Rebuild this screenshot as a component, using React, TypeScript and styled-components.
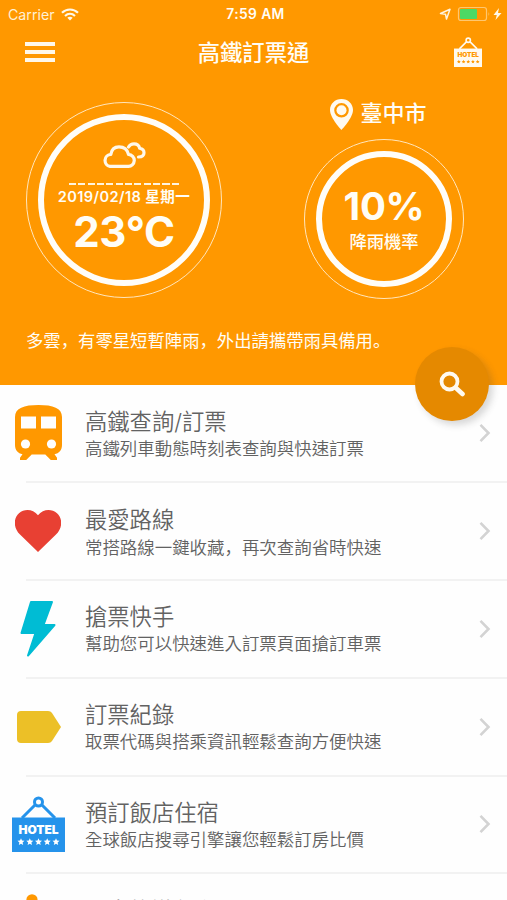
import React from "react";
import styled, { createGlobalStyle } from "styled-components";

const Global = createGlobalStyle`
  html, body { margin: 0; background: #fff; }
  body {
    height: 900px;
    overflow: hidden;
    font-family: Inter, "Noto Sans CJK TC", sans-serif;
    color: #626262;
  }
`;

const Screen = styled.div`
  width: 507px;
  height: 900px;
  overflow: hidden;
  display: flex;
  flex-direction: column;
  background: #fefefe;
`;

const Hero = styled.header`
  position: relative;
  flex: none;
  height: 384.5px;
  background: #ff9800;
  color: #fffdf6;
`;

const StatusBar = styled.div`
  height: 28px;
  display: grid;
  grid-template-columns: 1fr auto 1fr;
  align-items: center;
  padding: 0 5px 0 8px;
  box-sizing: border-box;
  font-size: 14.2px;
`;

const StatusGroup = styled.div<{ $end?: boolean }>`
  display: flex;
  align-items: center;
  gap: 6px;
  justify-content: ${(p) => (p.$end ? "flex-end" : "flex-start")};
  color: #fff0d4;
`;

const Clock = styled.span`
  font-weight: 600;
  font-size: 13.8px;
  letter-spacing: 0.4px;
  padding-left: 1px;
`;

const NavBar = styled.div`
  height: 48px;
  display: grid;
  grid-template-columns: 1fr auto 1fr;
  align-items: center;
  padding: 0 25px 0 25px;
`;

const Burger = styled.button`
  width: 30px;
  height: 20px;
  padding: 0;
  border: 0;
  background: none;
  display: flex;
  flex-direction: column;
  justify-content: space-between;
`;

const BurgerLine = styled.i`
  height: 4px;
  width: 30px;
  background: #fff8ea;
`;

const NavTitle = styled.h1`
  margin: 0;
  padding-top: 1px;
  font-size: 22.3px;
  font-weight: 500;
  line-height: 30px;
`;

const NavAction = styled.div`
  display: flex;
  justify-content: flex-end;
`;

const Weather = styled.section`
  display: flex;
  justify-content: space-between;
  height: 248px;
  padding: 0 43px 0 26px;
  box-sizing: border-box;
`;

const Ring = styled.div<{ $size: number }>`
  width: ${(p) => p.$size}px;
  height: ${(p) => p.$size}px;
  box-sizing: border-box;
  border: 1.4px solid #ffe6bd;
  border-radius: 50%;
  padding: 11px;
`;

const InnerRing = styled.div`
  width: 100%;
  height: 100%;
  box-sizing: border-box;
  border: 6.5px solid #fffdf8;
  border-radius: 50%;
  display: flex;
  flex-direction: column;
  align-items: center;
  white-space: nowrap;
`;

const TemperatureColumn = styled.div`
  padding-top: 26px;
`;

const RainColumn = styled.div`
  display: flex;
  flex-direction: column;
  width: 160px;
  padding-top: 22px;
`;

const Place = styled.div`
  display: flex;
  align-items: center;
  gap: 8px;
  height: 32px;
  margin: 0 0 9px 25.5px;
  font-size: 22px;
  line-height: 28px;
  font-weight: 500;
`;

const PlaceName = styled.span`
  padding-bottom: 3px;
`;

const CloudSlot = styled.div`
  height: 26px;
  margin-top: 22px;
`;

const Dashes = styled.div`
  width: 110px;
  height: 2px;
  margin-top: 15px;
  background: repeating-linear-gradient(90deg, #fff4df 0 7px, transparent 7px 9.35px);
`;

const DateText = styled.div`
  margin-top: 2px;
  font-size: 14.6px;
  line-height: 20px;
  font-weight: 600;
  letter-spacing: 0.4px;
`;

const BigValue = styled.div<{ $size: number; $top: number }>`
  margin-top: ${(p) => p.$top}px;
  font-size: ${(p) => p.$size}px;
  line-height: 46px;
  font-weight: 700;
  letter-spacing: -0.3px;
`;

const RainLabel = styled.div`
  margin-top: 2px;
  font-size: 17.3px;
  line-height: 22px;
  font-weight: 500;
`;

const Forecast = styled.p`
  margin: 4px 0 0 26px;
  font-size: 17.35px;
  line-height: 24px;
`;

const Mark = styled.span`
  font-family: "Noto Sans CJK SC", sans-serif;
`;

const SearchButton = styled.button`
  position: absolute;
  left: 415px;
  top: 347px;
  width: 74px;
  height: 74px;
  padding: 0;
  border: 0;
  border-radius: 50%;
  background: #e58900;
  box-shadow: 4px 4px 7px rgba(60, 60, 60, 0.2);
  display: flex;
  align-items: center;
  justify-content: center;
`;

const List = styled.main`
  display: flex;
  flex-direction: column;
`;

const Row = styled.article`
  flex: none;
  height: 97.75px;
  display: grid;
  grid-template-columns: 85px 1fr 29px;
`;

const IconSlot = styled.div`
  display: flex;
  align-items: center;
  justify-content: center;
  padding-right: 9px;
`;

const RowText = styled.div`
  padding-top: 22.4px;
  white-space: nowrap;
`;

const RowTitle = styled.h2`
  margin: 0;
  font-size: 22.3px;
  font-weight: 350;
  line-height: 30px;
`;

const RowNote = styled.p`
  margin: -1px 0 0;
  font-size: 17.45px;
  font-weight: 350;
  line-height: 26px;
`;

const Chevron = styled.svg`
  align-self: center;
`;

const Divider = styled.div`
  height: 2px;
  margin: -1px 0 -1px 26px;
  background: #f2f2f2;
`;

const HotelSign = ({ width, color, ink }: { width: number; color: string; ink: string }) => (
  <svg width={width} height={(width * 56) / 53} viewBox="0 0 53 56">
    <g fill="none" stroke={color} strokeWidth="3">
      <circle cx="26.5" cy="6" r="4" />
      <path d="M23.5 8.5 10 22M29.5 8.5 43 22" />
    </g>
    <path d="M0 21.5h53V56H0z" fill={color} />
    <text x="26.5" y="37.500" textAnchor="middle" textLength="40" fontFamily="Inter" fontSize="12" fontWeight="900" fill={ink}>
      HOTEL
    </text>
    {[9, 17.8, 26.5, 35.2, 44].map((x) => (
      <path
        key={x}
        transform={`translate(${x} 45.8)`}
        d="M0-3.5 1-1.2 3.5-1 1.6.7 2.2 3.2 0 1.9-2.2 3.2-1.6.7-3.5-1-1-1.2Z"
        fill={ink}
      />
    ))}
  </svg>
);

const TrainIcon = () => (
  <svg width="47" height="56" viewBox="0 0 47 56">
    <path
      fill="#ff9800"
      d="M0 12C0 3 9 0 23.500 0S47 3 47 12v28c0 5-3 8.500-7.500 9.300l2.500 3.500V55h-6.200l-5.500-5.500H16.700L11.200 55H5v-2.200l2.500-3.500C3 48.500 0 45 0 40Z"
    />
    <path fill="#fefefe" d="M6 11.500h15v12H6zM26 11.500h15v12H26z" />
    <circle cx="10.500" cy="39" r="4.600" fill="#fefefe" />
    <circle cx="36.500" cy="39" r="4.600" fill="#fefefe" />
  </svg>
);

const HeartIcon = () => (
  <svg width="46" height="42" viewBox="0 0 46 42">
    <path fill="#e84033" d="M23 42 5 24.500C-2 17.500-1.500 8 4 3.300 9.500-1.500 18-1 23 5.300 28-1 36.500-1.500 42 3.300 47.500 8 48 17.500 41 24.500Z" />
  </svg>
);

const BoltIcon = () => (
  <svg width="36" height="56" viewBox="0 0 36 56">
    <path
      fill="#00bcd4"
      stroke="#00bcd4"
      strokeWidth="2"
      strokeLinejoin="round"
      d="M11 1h21L23.500 24H34.500L8 54.500 15.500 32H1.500Z"
    />
  </svg>
);

const TagIcon = () => (
  <svg width="46" height="32" viewBox="-2 0 46 32">
    <path fill="#ecc027" d="M4 0h27c2 0 3 .8 4 2l9 14-9 14c-1 1.300-2 2-4 2H4c-2.500 0-4-1.500-4-4V4c0-2.500 1.500-4 4-4Z" />
  </svg>
);

const PersonIcon = () => (
  <svg width="30" height="56" viewBox="0 0 30 56">
    <circle cx="9" cy="5.800" r="5.600" fill="#ff9800" />
    <path fill="#ff9800" d="M2 14h14l6 18h-6v22H4V32H0Z" />
  </svg>
);

const ITEMS = [
  { title: "高鐵查詢/訂票", note: "高鐵列車動態時刻表查詢與快速訂票", icon: <TrainIcon /> },
  { title: "最愛路線", note: "常搭路線一鍵收藏，再次查詢省時快速", icon: <HeartIcon /> },
  { title: "搶票快手", note: "幫助您可以快速進入訂票頁面搶訂車票", icon: <BoltIcon /> },
  { title: "訂票紀錄", note: "取票代碼與搭乘資訊輕鬆查詢方便快速", icon: <TagIcon /> },
  { title: "預訂飯店住宿", note: "全球飯店搜尋引擎讓您輕鬆訂房比價", icon: <HotelSign width={53} color="#2593eb" ink="#fff" /> },
  { title: "日本旅遊行程", note: "", icon: <PersonIcon /> },
];

// Full-width commas and stops sit at the lower left of their cell.
const withMarks = (text: string) =>
  text.split(/([，。])/).map((part, i) => (/[，。]/.test(part) ? <Mark key={i}>{part}</Mark> : part));

export default function App() {
  return (
    <Screen>
      <Global />
      <Hero>
        <StatusBar>
          <StatusGroup>
            <span>Carrier</span>
            <svg width="18" height="13" viewBox="0 0 18 13" fill="none" stroke="#fff8ea" strokeWidth="2.200">
              <path d="M1 4.800C5.500.4 12.500.4 17 4.800M4 8c3-2.800 7-2.800 10 0" />
              <path d="M9 12.500 6.300 9.800c1.600-1.400 3.800-1.400 5.400 0Z" fill="#fff8ea" stroke="none" />
            </svg>
          </StatusGroup>
          <Clock>7:59 AM</Clock>
          <StatusGroup $end>
            <svg width="63" height="16" viewBox="0 0 63 16">
              <path d="M1.500 7.500 11 3.200 7.500 13 6.500 8.200Z" fill="none" stroke="#fff4df" strokeWidth="1.500" strokeLinejoin="round" />
              <rect x="19.500" y="1.500" width="28" height="13" rx="2.500" fill="none" stroke="#ffc76f" strokeWidth="1.200" />
              <rect x="21" y="3" width="17" height="10" rx="1" fill="#4cd964" />
              <path d="M49.500 6v4q1.600-2 0-4Z" fill="#ffc76f" />
              <path d="M60 2 54.500 9h3.300L56.500 14l6-7h-3.500Z" fill="#fff8ea" />
            </svg>
          </StatusGroup>
        </StatusBar>
        <NavBar>
          <Burger aria-label="選單">
            <BurgerLine />
            <BurgerLine />
            <BurgerLine />
          </Burger>
          <NavTitle>高鐵訂票通</NavTitle>
          <NavAction>
            <HotelSign width={28.500} color="#fffaf0" ink="#ff9800" />
          </NavAction>
        </NavBar>
        <Weather>
          <TemperatureColumn>
            <Ring $size={196}>
              <InnerRing>
                <CloudSlot>
                  <svg width="44" height="26" viewBox="0 0 44 26" fill="none" stroke="#fff8ea" strokeWidth="3.200" strokeLinecap="round" strokeLinejoin="round">
                    <path d="M8 24.400h18a6 6 0 0 0 .5-12C25.500 8 22.500 4.800 17 4.800S9.500 8 8.800 12.500A6 6 0 0 0 8 24.400Z" />
                    <path d="M26.500 5C28 2.500 30 1.800 32 1.800c3.500 0 5.200 2.200 5.700 4.500 2.500.5 4.300 2.200 4.300 4.500 0 2.700-2 4.200-5.500 4.200" />
                  </svg>
                </CloudSlot>
                <Dashes />
                <DateText>2019/02/18 星期一</DateText>
                <BigValue $size={42} $top={2}>23°C</BigValue>
              </InnerRing>
            </Ring>
          </TemperatureColumn>
          <RainColumn>
            <Place>
              <svg width="23" height="31" viewBox="0 0 23 31">
                <path fill="#fffaf0" fillRule="evenodd" d="M11.500 0C5 0 0 4.800 0 11c0 8 11.500 20 11.500 20S23 19 23 11C23 4.800 18 0 11.500 0Zm0 4a7.300 7.300 0 1 1 0 14.600 7.300 7.300 0 0 1 0-14.600Z" />
                <circle cx="11.500" cy="11.300" r="5" fill="#fffaf0" />
              </svg>
              <PlaceName>臺中市</PlaceName>
            </Place>
            <Ring $size={160}>
              <InnerRing>
                <BigValue $size={38.500} $top={26}>10%</BigValue>
                <RainLabel>降雨機率</RainLabel>
              </InnerRing>
            </Ring>
          </RainColumn>
        </Weather>
        <Forecast>{withMarks("多雲，有零星短暫陣雨，外出請攜帶雨具備用。")}</Forecast>
        <SearchButton aria-label="查詢">
          <svg width="26" height="26" viewBox="0 0 26 26" fill="none" stroke="#fffaf0">
            <circle cx="10.500" cy="10.500" r="8" strokeWidth="3.800" />
            <path d="m17 17 6.500 6" strokeWidth="4.600" strokeLinecap="round" />
          </svg>
        </SearchButton>
      </Hero>
      <List>
        {ITEMS.map((item, i) => (
          <React.Fragment key={item.title}>
            {i > 0 && <Divider />}
            <Row>
              <IconSlot>{item.icon}</IconSlot>
              <RowText>
                <RowTitle>{item.title}</RowTitle>
                <RowNote>{withMarks(item.note)}</RowNote>
              </RowText>
              <Chevron width="14" height="20" viewBox="0 0 14 20" fill="none" stroke="#d3d3d3" strokeWidth="2.600">
                <path d="m2.500 1.800 8 8.200-8 8.200" />
              </Chevron>
            </Row>
          </React.Fragment>
        ))}
      </List>
    </Screen>
  );
}
